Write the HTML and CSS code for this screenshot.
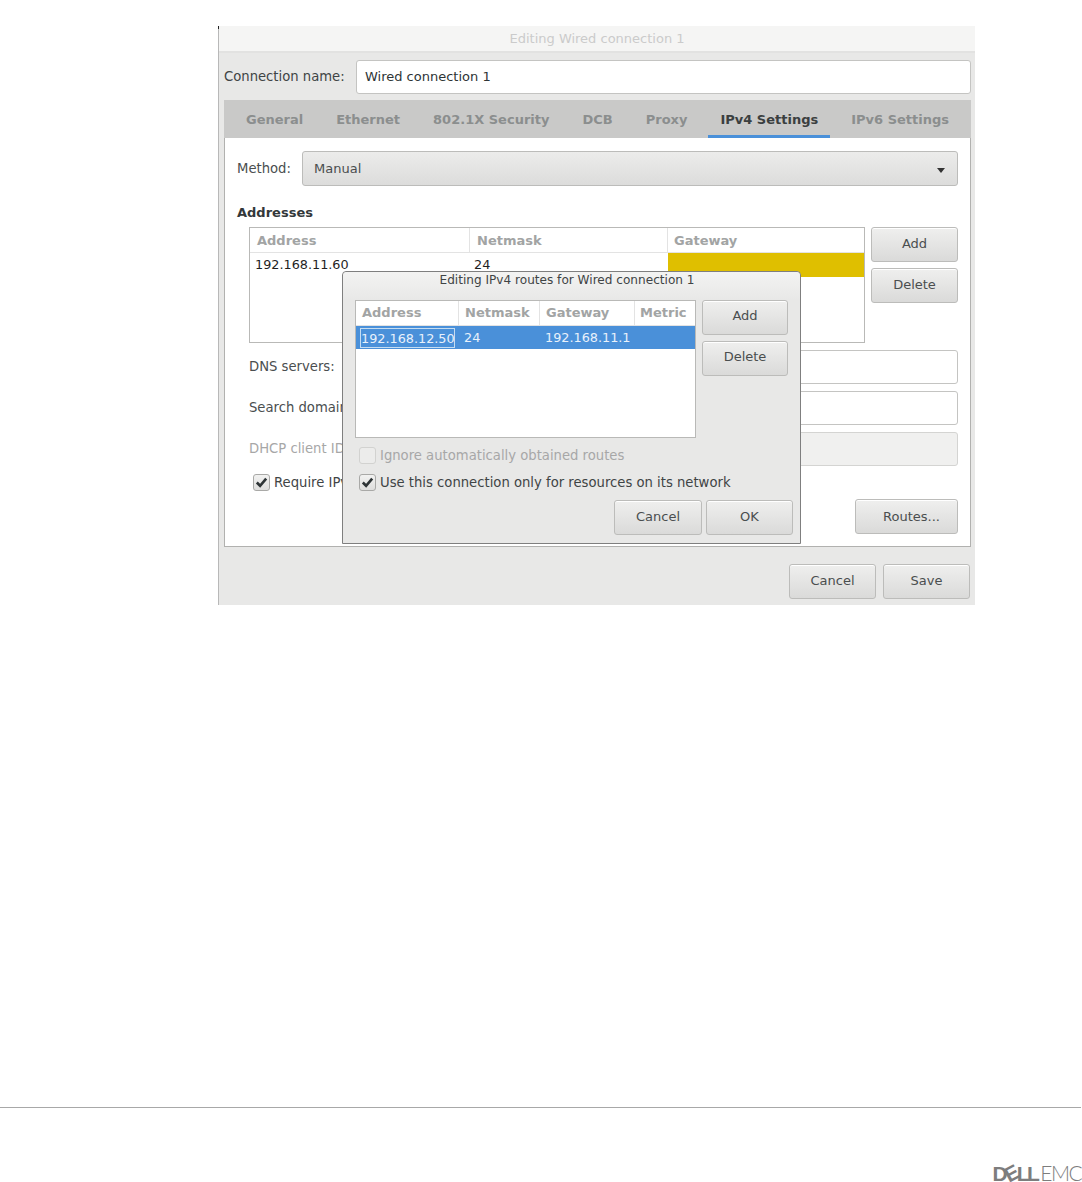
FILE: index.html
```html
<!DOCTYPE html>
<html lang="en">
<head>
<meta charset="utf-8">
<title>Editing Wired connection 1</title>
<link rel="stylesheet" href="styles.css">
</head>
<body>
<main class="page">
  <section class="window">
    <header class="titlebar">Editing Wired connection 1</header>
    <div class="name-row">
      <span class="name-label">Connection name:</span>
      <div class="entry name-entry">Wired connection 1</div>
    </div>
    <div class="notebook">
      <nav class="tabs">
        <span class="tab">General</span>
        <span class="tab">Ethernet</span>
        <span class="tab">802.1X Security</span>
        <span class="tab">DCB</span>
        <span class="tab">Proxy</span>
        <span class="tab tab-active">IPv4 Settings</span>
        <span class="tab">IPv6 Settings</span>
      </nav>
      <div class="tab-body">
        <div class="method-row">
          <span class="label">Method:</span>
          <div class="combo"><span>Manual</span><i class="caret"></i></div>
        </div>
        <div class="section-title">Addresses</div>
        <div class="addr-row">
          <div class="tree addr-tree">
            <div class="tree-head addr-cols">
              <span class="th">Address</span><span class="th">Netmask</span><span class="th">Gateway</span>
            </div>
            <div class="addr-cols addr-data">
              <span class="td">192.168.11.60</span><span class="td td-mask">24</span><span class="td td-yellow"></span>
            </div>
          </div>
          <div class="side-btns">
            <button class="btn">Add</button>
            <button class="btn btn-delete">Delete</button>
          </div>
        </div>
        <div class="field-row"><span class="label">DNS servers:</span><div class="entry grow"></div></div>
        <div class="field-row"><span class="label">Search domains:</span><div class="entry grow"></div></div>
        <div class="field-row"><span class="label label-off">DHCP client ID:</span><div class="entry grow entry-off"></div></div>
        <label class="check check-main"><i class="box box-on"><svg viewBox="0 0 16 16"><path d="M3 8 6.5 11.5 13 3.8"/></svg></i>Require IPv4 addressing for this connection to complete</label>
        <div class="routes-row"><button class="btn btn-routes">Routes...</button></div>
      </div>
    </div>
    <footer class="actions">
      <button class="btn btn-action">Cancel</button>
      <button class="btn btn-action">Save</button>
    </footer>

    <section class="dialog">
      <div class="dialog-title">Editing IPv4 routes for Wired connection 1</div>
      <div class="dialog-main">
        <div class="tree route-tree">
          <div class="tree-head route-cols">
            <span class="th">Address</span><span class="th">Netmask</span><span class="th">Gateway</span><span class="th">Metric</span>
          </div>
          <div class="route-cols route-sel">
            <span class="td td-edit">192.168.12.50</span><span class="td">24</span><span class="td">192.168.11.1</span><span class="td"></span>
          </div>
        </div>
        <div class="side-btns route-btns">
          <button class="btn">Add</button>
          <button class="btn btn-delete">Delete</button>
        </div>
      </div>
      <label class="check check-off"><i class="box"></i>Ignore automatically obtained routes</label>
      <label class="check check-on"><i class="box box-on"><svg viewBox="0 0 16 16"><path d="M3 8 6.5 11.5 13 3.8"/></svg></i>Use this connection only for resources on its network</label>
      <div class="dialog-actions">
        <button class="btn btn-action">Cancel</button>
        <button class="btn btn-action">OK</button>
      </div>
    </section>
  </section>

  <footer class="page-footer">
    <div class="logo"><span class="logo-dell">D<span class="logo-e">E</span>LL</span><span class="logo-emc">EMC</span></div>
  </footer>
</main>
</body>
</html>
```
FILE: styles.css
```css
* { box-sizing: border-box; }
html, body { margin: 0; padding: 0; background: #fff; }
body { font-family: "DejaVu Sans", sans-serif; font-size: 13px; color: #3a3f40; }
.page { width: 1082px; height: 1182px; padding-top: 26px; display: flex; flex-direction: column; overflow: hidden; }

.window {
  position: relative; width: 757px; height: 579px; margin-left: 218px;
  background: #e8e8e7; border-left: 1px solid #b8b8b8; display: flex; flex-direction: column;
}
.window::before { content: ""; position: absolute; left: -1px; top: 0; width: 1px; height: 3px; background: #222; }
.titlebar {
  height: 27px; flex: none; background: #f5f5f4; border-bottom: 2px solid #e2e2e1;
  color: #cbcbcb; font-size: 13px; text-align: center; line-height: 25px;
}
.name-row { display: flex; align-items: center; height: 34px; margin: 7px 4px 0 5px; flex: none; font-size: 13.2px; }
.name-label { width: 132px; flex: none; color: #3f4445; padding-bottom: 2px; }
.entry { height: 34px; background: #fff; border: 1px solid #c4c4c2; border-radius: 3px; line-height: 32px; padding-left: 8px; color: #2e3436; }
.name-entry { flex: 1; font-size: 13px; }

.notebook { margin: 6px 4px 0 5px; height: 447px; flex: none; border: 1px solid #b1b1af; border-top: 0; background: #fff; display: flex; flex-direction: column; }
.tabs { height: 38px; flex: none; background: #c9c9c8; display: flex; margin: 0 -1px; padding-left: 10px; }
.tab { padding: 1px 12px 0; margin-right: 9px; line-height: 38px; font-weight: 700; color: #8b8e8e; white-space: nowrap; }
.tab:last-child { margin-right: 0; }
.tab-active { color: #3b3f40; box-shadow: inset 0 -3px 0 #4a90d9; }

.tab-body { flex: 1; padding: 13px 12px 0 12px; display: flex; flex-direction: column; }
.method-row { display: flex; align-items: center; height: 35px; flex: none; }
.label { color: #4a4e4f; white-space: nowrap; width: 65px; flex: none; font-size: 13.2px; }
.label-off { color: #a7a7a7; }
.combo {
  flex: 1; height: 35px; border: 1px solid #bcbcba; border-radius: 3px; background: linear-gradient(#ececeb, #dcdcdb);
  display: flex; align-items: center; justify-content: space-between; padding: 0 12px 0 11px; color: #4a4e4f;
}
.caret { width: 0; height: 0; border-left: 4.5px solid transparent; border-right: 4.5px solid transparent; border-top: 5px solid #333; margin-top: 3px; }
.section-title { font-weight: 700; color: #33383a; margin-top: 18px; height: 23px; line-height: 17px; flex: none; }

.addr-row { display: flex; margin-left: 12px; height: 116px; flex: none; gap: 6px; }
.tree { background: #fff; border: 1px solid #b9b9b7; }
.addr-tree { width: 616px; flex: none; }
.tree-head { height: 25px; border-bottom: 1px solid #e3e3e3; }
.th { display: block; font-weight: 700; color: #a2a4a4; padding-left: 7px; line-height: 24px; border-right: 1px solid #e3e3e3; white-space: nowrap; overflow: hidden; }
.th:last-child { border-right: 0; }
.addr-cols { display: grid; grid-template-columns: 220px 198px 196px; }
.addr-cols .th { line-height: 26px; }
.addr-cols .th:last-child { padding-left: 6px; }
.td { display: block; padding-left: 5px; line-height: 24px; color: #1f1f1f; white-space: nowrap; font-size: 12.8px; }
.td-mask { padding-left: 4px; }
.addr-data { height: 24px; }
.td-yellow { background: #dfbf00; }

.side-btns { display: flex; flex-direction: column; flex: 1; }
.btn {
  font: inherit; color: #4a4e4f; height: 35px; border: 1px solid #bcbcba; border-radius: 3px; background: linear-gradient(#efefee, #dadad9);
  padding: 0 0 2px; box-shadow: 0 1px 0 #fff inset; flex: none;
}
.btn-delete { margin-top: 6px; }

.field-row { display: flex; align-items: center; height: 35px; margin: 6px 0 0 12px; flex: none; }
.field-row .label { width: 100px; }
.grow { flex: 1; }
.entry-off { background: #f0f0ef; border-color: #d4d4d2; }

.check { display: flex; align-items: center; white-space: nowrap; color: #3f4445; font-size: 13.2px; }
.box { width: 17px; height: 17px; flex: none; margin-right: 4px; border: 1px solid #a9a9a7; border-radius: 3px; background: linear-gradient(#f2f2f1, #dededd); display: block; }
.box svg { display: block; width: 15px; height: 15px; }
.box svg path { fill: none; stroke: #2e3436; stroke-width: 2.8; }
.check-main { margin: 8px 0 0 16px; height: 17px; flex: none; }
.routes-row { display: flex; justify-content: flex-end; margin-top: 8px; flex: none; }
.btn-routes { width: 103px; padding: 0 0 0 10px; }

.actions { display: flex; justify-content: flex-end; gap: 7px; padding: 17px 5px 0 0; flex: none; }
.btn-action { width: 87px; }

.dialog {
  position: absolute; left: 123px; top: 245px; width: 459px; height: 273px;
  background: #e8e8e7; border: 1px solid #7f7f7f; border-radius: 4px 4px 0 0; padding: 0 7px 0 12px;
  display: flex; flex-direction: column;
}
.dialog-title { height: 28px; flex: none; margin: 0 -7px 0 -12px; padding-right: 9px; font-size: 12.1px; line-height: 16px; text-align: center; color: #3f4445; background: linear-gradient(#f3f3f2, #e8e8e7); border-radius: 4px 4px 0 0; }
.dialog-main { display: flex; gap: 6px; height: 138px; flex: none; }
.route-tree { width: 341px; flex: none; }
.route-cols { display: grid; grid-template-columns: 103px 81px 95px 60px; }
.route-cols .th { padding-left: 6px; }
.route-cols .th:last-child { padding-left: 5px; }
.route-sel { background: #4a90d9; height: 23px; }
.route-sel .td { color: #e8f1fb; line-height: 24px; }
.route-sel .td-edit { padding: 1px 0 0; margin: 2px 0 1px 4px; width: 95px; height: 20px; line-height: 17px; border: 1px solid #c5ddf2; text-align: center; }
.route-btns { width: 86px; flex: none; }
.route-btns .btn { padding-bottom: 4px; }
.check-off { color: #a7a7a7; margin: 9px 0 0 4px; height: 17px; flex: none; }
.check-off .box { background: #ececeb; border-color: #d2d2d0; }
.check-on { margin: 10px 0 0 4px; height: 17px; flex: none; }
.dialog-actions { display: flex; justify-content: flex-end; gap: 4px; margin-top: 9px; flex: none; }
.dialog-actions .btn-action:first-child { width: 88px; }

.page-footer { margin-top: 502px; height: 75px; width: 1081px; border-top: 1px solid #a8a8a8; padding-bottom: 1px; flex: none; display: flex; justify-content: flex-end; align-items: flex-end; }
.logo { display: flex; align-items: baseline; color: #7d7d7d; font-family: "Liberation Sans", Arial, sans-serif; font-size: 21px; line-height: 16px; height: 16px; }
.logo-dell { font-weight: 700; letter-spacing: -2.5px; margin-right: 3px; }
.logo-e { display: inline-block; transform: rotate(-28deg); }
.logo-emc { font-family: "Lato", sans-serif; font-weight: 300; letter-spacing: -1.6px; }
```
